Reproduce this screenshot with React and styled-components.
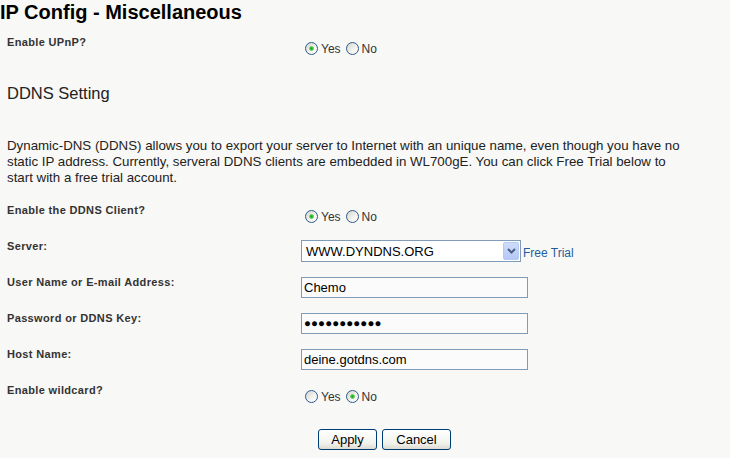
import React from 'react'
import styled, { createGlobalStyle } from 'styled-components'

const Global = createGlobalStyle`
	html, body {
		margin: 0;
		padding: 0;
		background: #f8f8f6;
	}
	body {
		font-family: "Liberation Sans", Arial, sans-serif;
		color: #222;
	}
`

export default function App() {
	return (
		<Page>
			<Global />
			<Title>IP Config - Miscellaneous</Title>

			<Row>
				<Label>Enable UPnP?</Label>
				<Control>
					<RadioPair name="upnp" value="yes" />
				</Control>
			</Row>

			<Heading>DDNS Setting</Heading>
			<Intro>
				Dynamic-DNS (DDNS) allows you to export your server to Internet with an unique name, even though you have no<br />
				static IP address. Currently, serveral DDNS clients are embedded in WL700gE. You can click Free Trial below to<br />
				start with a free trial account.
			</Intro>

			<Rows>
				<Row>
					<Label>Enable the DDNS Client?</Label>
					<Control>
						<RadioPair name="ddns" value="yes" />
					</Control>
				</Row>
				<Row>
					<Label>Server:</Label>
					<Control>
						<SelectBox>
							<span>WWW.DYNDNS.ORG</span>
							<DropButton>
								<svg width="9" height="6" viewBox="0 0 9 6">
									<path d="M1 1 L4.5 4.5 L8 1" fill="none" stroke="#4a5d82" strokeWidth="2" />
								</svg>
							</DropButton>
						</SelectBox>
						<Link href="#">Free Trial</Link>
					</Control>
				</Row>
				<Row>
					<Label>User Name or E-mail Address:</Label>
					<Control>
						<TextBox defaultValue="Chemo" />
					</Control>
				</Row>
				<Row>
					<Label>Password or DDNS Key:</Label>
					<Control>
						<TextBox $secret defaultValue={'\u25CF'.repeat(11)} />
					</Control>
				</Row>
				<Row>
					<Label>Host Name:</Label>
					<Control>
						<TextBox defaultValue="deine.gotdns.com" />
					</Control>
				</Row>
				<Row>
					<Label>Enable wildcard?</Label>
					<Control>
						<RadioPair name="wildcard" value="no" />
					</Control>
				</Row>
			</Rows>

			<Actions>
				<Button $w={59}>Apply</Button>
				<Button $w={69}>Cancel</Button>
			</Actions>
		</Page>
	)
}

function RadioPair({ name, value }) {
	return (
		<Radios>
			<Radio type="radio" name={name} defaultChecked={value === 'yes'} />
			<RadioText>Yes</RadioText>
			<Radio type="radio" name={name} defaultChecked={value === 'no'} $gap />
			<RadioText>No</RadioText>
		</Radios>
	)
}

const Page = styled.div`
	width: 730px;
	height: 458px;
	overflow: hidden;
`

const Title = styled.h1`
	margin: 0 0 12px 0;
	font-size: 20px;
	line-height: 24px;
	font-weight: bold;
	color: #000;
`

const Rows = styled.div`
	margin-top: 18px;
`

const Row = styled.div`
	display: grid;
	grid-template-columns: 301px 1fr;
	align-items: start;
	height: 36px;
`

const Label = styled.div`
	padding-left: 7px;
	font-size: 11px;
	line-height: 13px;
	letter-spacing: 0.35px;
	font-weight: bold;
	color: #333;
`

const Control = styled.div`
	display: flex;
	align-items: center;
	height: 22px;
`

const Heading = styled.h2`
	margin: 11px 0 0 7px;
	font-size: 16.5px;
	line-height: 20px;
	font-weight: normal;
	color: #222;
`

const Intro = styled.p`
	margin: 35px 0 0 7px;
	font-size: 13.3px;
	line-height: 16px;
	color: #222;
`

const Radios = styled.div`
	display: flex;
	align-items: center;
	padding-top: 3px;
`

const Radio = styled.input`
	appearance: none;
	width: 13px;
	height: 13px;
	margin: 0 3px 0 ${p => (p.$gap ? '5px' : '4px')};
	border: 1px solid #2c5a8a;
	border-radius: 50%;
	box-sizing: border-box;
	background: linear-gradient(135deg, #d6d6cf, #f4f4f0 60%, #ffffff);
	&:checked {
		background: radial-gradient(circle at 50% 50%, #1f9d1f 0, #4ccb4c 1.8px, rgba(255, 255, 255, 0) 2.8px),
			linear-gradient(135deg, #d6d6cf, #f4f4f0 60%, #ffffff);
	}
`

const RadioText = styled.span`
	font-size: 12px;
	color: #333;
`

const SelectBox = styled.div`
	box-sizing: border-box;
	width: 220px;
	height: 22px;
	border: 1px solid #7f9db9;
	background: #fff;
	display: flex;
	align-items: center;
	justify-content: space-between;
	padding: 0 1px 0 4px;
	font-size: 13px;
	color: #000;
`

const DropButton = styled.span`
	box-sizing: border-box;
	width: 16px;
	height: 18px;
	border: 1px solid #b6c9f2;
	border-radius: 2px;
	background: linear-gradient(#cfdcfb, #b4c8f6);
	display: flex;
	align-items: center;
	justify-content: center;
`

const Link = styled.a`
	margin: 3px 0 0 2px;
	font-size: 12px;
	color: #1f5f9f;
	text-decoration: none;
`

const TextBox = styled.input.attrs({ type: 'text', readOnly: true })`
	box-sizing: border-box;
	width: 227px;
	height: 21px;
	margin: 0;
	padding: 0 2px;
	border: 1px solid #7f9db9;
	background: #fbfbfb;
	font-family: "Liberation Sans", Arial, sans-serif;
	font-size: ${p => (p.$secret ? '11.5px' : '13px')};
	letter-spacing: ${p => (p.$secret ? '0.1px' : '0')};
	color: #000;
	outline: none;
`

const Actions = styled.div`
	display: flex;
	gap: 5px;
	margin: 9px 0 0 318px;
`

const Button = styled.button`
	box-sizing: border-box;
	width: ${p => p.$w}px;
	height: 21px;
	padding: 0;
	border: 1px solid #003c74;
	border-radius: 3px;
	background: linear-gradient(#ffffff, #f2f2ec 70%, #dcdad0);
	font-family: "Liberation Sans", Arial, sans-serif;
	font-size: 13px;
	color: #000;
`
